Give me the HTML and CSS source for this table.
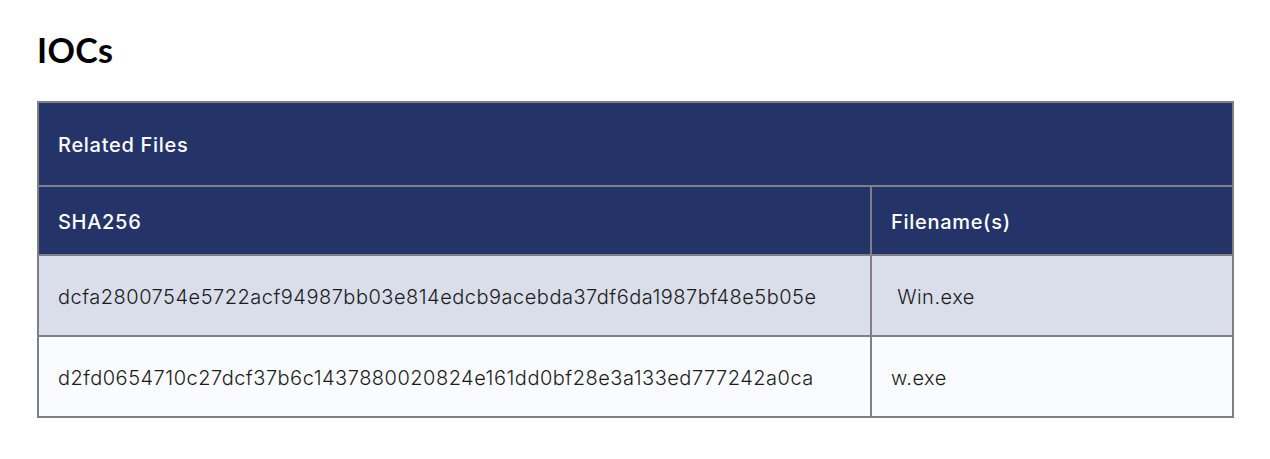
FILE: index.html
```html
<!DOCTYPE html>
<html>
<head>
<meta charset="utf-8">
<link rel="stylesheet" href="styles.css">
</head>
<body>
<main class="page">
  <h2 class="title">IOCs</h2>
  <table class="ioc">
    <thead>
      <tr class="caption-row"><th colspan="2">Related Files</th></tr>
      <tr class="head-row"><th class="col-hash">SHA256</th><th>Filename(s)</th></tr>
    </thead>
    <tbody>
      <tr class="odd"><td>dcfa2800754e5722acf94987bb03e814edcb9acebda37df6da1987bf48e5b05e</td><td>&nbsp;Win.exe</td></tr>
      <tr class="even"><td>d2fd0654710c27dcf37b6c1437880020824e161dd0bf28e3a133ed777242a0ca</td><td>w.exe</td></tr>
    </tbody>
  </table>
</main>
</body>
</html>
```
FILE: styles.css
```css
html, body { margin: 0; padding: 0; background: #fff; }
.page { padding: 30px 36px 0 37px; font-family: Inter, "Noto Sans", sans-serif; color: #1b1b1b; }
.title { margin: 0 0 31px; font-size: 34px; font-weight: 700; line-height: 40px; color: #000; font-family: Lato, sans-serif; letter-spacing: 0.3px; }
.ioc { width: 1197px; border-collapse: collapse; border: 2px solid #7f8086; }
.ioc th, .ioc td { border: 2px solid #7f8086; text-align: left; padding: 2px 19px 0; font-size: 20px; }
.ioc th { background: #243368; color: #fff; font-weight: 500; letter-spacing: 0.7px; }
.caption-row th { height: 80px; }
.head-row th { height: 65px; }
.col-hash { width: 793px; }
.ioc td { height: 77px; font-weight: 300; letter-spacing: 0.5px; }
.odd td { background: #d9deea; }
.even td { background: #fafbfe; }
```
